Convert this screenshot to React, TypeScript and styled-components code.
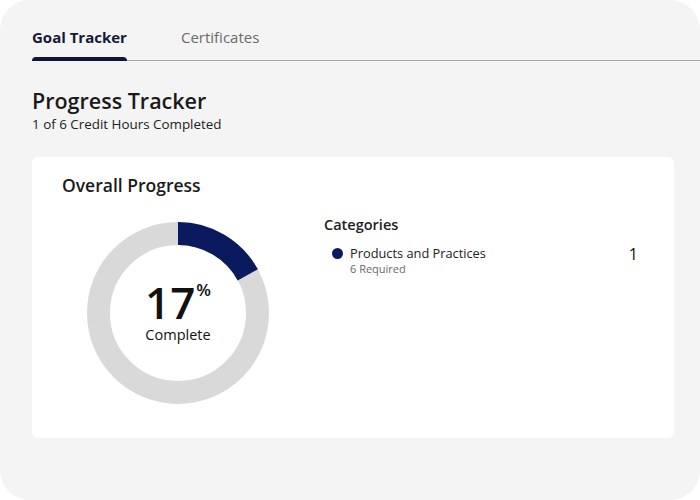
import styled, { createGlobalStyle } from 'styled-components';

const GlobalStyle = createGlobalStyle`
  html, body {
    margin: 0;
    padding: 0;
    background: #ffffff;
  }
  body {
    font-family: 'Open Sans', 'Noto Sans', sans-serif;
    color: #1c1c1c;
  }
`;

const NAVY = '#0b1a5e';

const Frame = styled.div`
  width: 700px;
  height: 500px;
  box-sizing: border-box;
  background: #f4f4f4;
  border-radius: 30px;
  padding: 0 26px 0 32px;
  display: flex;
  flex-direction: column;
  overflow: hidden;
`;

const TabBar = styled.div`
  display: flex;
  gap: 54px;
  margin-top: 25px;
  margin-right: -26px;
  border-bottom: 1px solid #a9a9a9;
`;

const Tab = styled.div<{ active?: boolean }>`
  position: relative;
  font-size: 15px;
  line-height: 24px;
  padding-bottom: 11px;
  font-weight: ${({ active }) => (active ? 700 : 400)};
  color: ${({ active }) => (active ? '#141a38' : '#6b6b6b')};
  &::after {
    content: '';
    display: ${({ active }) => (active ? 'block' : 'none')};
    position: absolute;
    left: 0;
    right: 0;
    bottom: -1px;
    height: 4px;
    border-radius: 4px 4px 0 0;
    background: #101636;
  }
`;

const Title = styled.h1`
  margin: 26px 0 0;
  font-size: 21.5px;
  line-height: 28px;
  font-weight: 600;
  color: #1a1a1a;
`;

const Subtitle = styled.div`
  font-size: 13.4px;
  line-height: 18px;
  color: #222;
`;

const Card = styled.div`
  margin-top: 24px;
  height: 281px;
  box-sizing: border-box;
  background: #ffffff;
  border-radius: 6px;
  padding: 16px 30px;
  display: grid;
  grid-template-columns: 262px 1fr;
  gap: 0;
`;

const ProgressCol = styled.div`
  display: flex;
  flex-direction: column;
`;

const CardTitle = styled.h2`
  margin: 0;
  font-size: 17.5px;
  line-height: 24px;
  font-weight: 600;
  color: #1a1a1a;
`;

const DonutWrap = styled.div`
  position: relative;
  width: 184px;
  height: 184px;
  margin: 24px 0 0 24px;
`;

const DonutLabel = styled.div`
  position: absolute;
  inset: 0;
  display: flex;
  flex-direction: column;
  align-items: center;
  justify-content: center;
  padding-top: 2px;
`;

const Percent = styled.div`
  font-size: 44px;
  line-height: 38px;
  font-weight: 600;
  color: #111;
  display: flex;
  align-items: flex-start;
  sup {
    font-size: 17px;
    line-height: 16px;
    margin-left: 1px;
    margin-top: -1px;
    font-weight: 600;
  }
`;

const CompleteText = styled.div`
  font-size: 14.5px;
  line-height: 20px;
  margin-top: 4px;
  font-weight: 500;
  color: #111;
`;

const CategoriesCol = styled.div`
  padding-top: 41px;
`;

const CategoriesTitle = styled.div`
  font-size: 14.5px;
  line-height: 22px;
  font-weight: 600;
  color: #222;
`;

const CategoryRow = styled.div`
  display: grid;
  grid-template-columns: 18px 1fr auto;
  align-items: start;
  margin-top: 8px;
  padding-left: 8px;
`;

const Dot = styled.span<{ color: string }>`
  width: 11px;
  height: 11px;
  border-radius: 50%;
  background: ${({ color }) => color};
  margin-top: 4px;
`;

const CategoryName = styled.div`
  font-size: 12.8px;
  line-height: 18px;
  color: #222;
`;

const CategoryHint = styled.div`
  font-size: 11px;
  line-height: 14px;
  color: #6a6a6a;
`;

const CategoryCount = styled.div`
  font-size: 16px;
  line-height: 20px;
  color: #111;
  padding-right: 6px;
`;

const Donut = ({ pct }: { pct: number }) => {
  const r = 79.5;
  const c = 2 * Math.PI * r;
  return (
    <svg width="184" height="184" viewBox="0 0 184 184">
      <circle cx="92" cy="92" r={r} fill="none" stroke="#d9d9d9" strokeWidth="23" />
      <circle
        cx="92"
        cy="92"
        r={r}
        fill="none"
        stroke={NAVY}
        strokeWidth="23"
        strokeDasharray={`${(c * pct) / 100} ${c}`}
        transform="rotate(-90 92 92)"
      />
    </svg>
  );
};

export default function App() {
  return (
    <>
      <GlobalStyle />
      <Frame>
        <TabBar>
          <Tab active>Goal Tracker</Tab>
          <Tab>Certificates</Tab>
        </TabBar>
        <Title>Progress Tracker</Title>
        <Subtitle>1 of 6 Credit Hours Completed</Subtitle>
        <Card>
          <ProgressCol>
            <CardTitle>Overall Progress</CardTitle>
            <DonutWrap>
              <Donut pct={17} />
              <DonutLabel>
                <Percent>
                  17<sup>%</sup>
                </Percent>
                <CompleteText>Complete</CompleteText>
              </DonutLabel>
            </DonutWrap>
          </ProgressCol>
          <CategoriesCol>
            <CategoriesTitle>Categories</CategoriesTitle>
            <CategoryRow>
              <Dot color={NAVY} />
              <div>
                <CategoryName>Products and Practices</CategoryName>
                <CategoryHint>6 Required</CategoryHint>
              </div>
              <CategoryCount>1</CategoryCount>
            </CategoryRow>
          </CategoriesCol>
        </Card>
      </Frame>
    </>
  );
}
